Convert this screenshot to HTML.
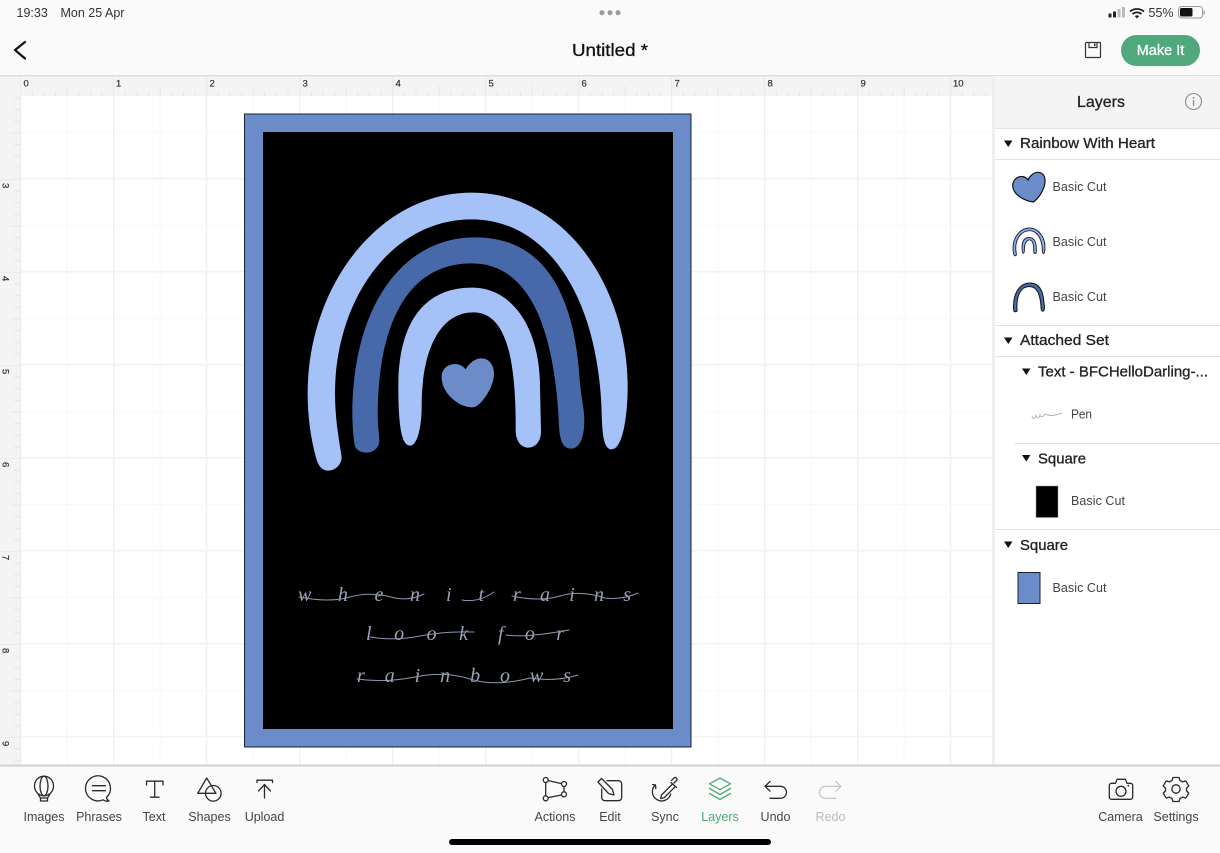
<!DOCTYPE html>
<html><head><meta charset="utf-8"><title>Untitled</title>
<style>
html,body{margin:0;padding:0;background:#fafafa;width:1220px;height:853px;overflow:hidden}
svg{display:block}
text{font-family:"Liberation Sans",sans-serif}
.lab{font-size:12.5px;fill:#444;text-anchor:middle}
.ic{fill:none;stroke:#2b2b2b;stroke-width:1.3;stroke-linecap:round;stroke-linejoin:round}
.rl{font-size:9.5px;fill:#333;stroke:#333;stroke-width:.2}
.hd{font-size:14.5px;fill:#222;stroke:#222;stroke-width:.3}
.cut{font-size:12.5px;fill:#444}
.tri{fill:#111}
.sc{font-family:"Liberation Serif",serif;font-style:italic;font-size:20px;fill:#9ba2b6}
.cn{fill:none;stroke:#8f97ad;stroke-width:1;stroke-linecap:round}
</style></head><body>
<svg width="1220" height="853" viewBox="0 0 1220 853" xmlns="http://www.w3.org/2000/svg">
<defs>
<pattern id="gv" x="20.2" y="0" width="93" height="10" patternUnits="userSpaceOnUse"><rect x="0" width="1" height="10" fill="#ebebeb"/><rect x="46.5" width="1" height="10" fill="#f7f7f7"/></pattern>
<pattern id="gh" x="0" y="85.5" width="10" height="93" patternUnits="userSpaceOnUse"><rect y="92.2" width="10" height=".8" fill="#f3f3f3"/><rect y="0" width="10" height="1" fill="#f3f3f3"/><rect y="46.5" width="10" height="1" fill="#f8f8f8"/></pattern>
<pattern id="tx" x="20.2" y="76" width="93" height="20" patternUnits="userSpaceOnUse"><g fill="#e6e6e6"><rect x="11.6" y="15" width="1" height="5"/><rect x="23.2" y="15" width="1" height="5"/><rect x="34.9" y="15" width="1" height="5"/><rect x="46.5" y="10" width="1" height="10"/><rect x="58.1" y="15" width="1" height="5"/><rect x="69.8" y="15" width="1" height="5"/><rect x="81.4" y="15" width="1" height="5"/><rect x="0" y="0" width="1" height="20" fill="#e8e8e8"/></g></pattern>
<pattern id="ty" x="0" y="86" width="20" height="93" patternUnits="userSpaceOnUse"><g fill="#e6e6e6"><rect x="14" y="11.6" width="6" height="1"/><rect x="14" y="23.2" width="6" height="1"/><rect x="14" y="34.9" width="6" height="1"/><rect x="10" y="46.5" width="10" height="1"/><rect x="14" y="58.1" width="6" height="1"/><rect x="14" y="69.8" width="6" height="1"/><rect x="14" y="81.4" width="6" height="1"/><rect x="0" y="0" width="20" height="1" fill="#ebebeb"/></g></pattern>
<path id="ao" d="M65 840C45 770 38 700 38 640C38 320 250 38 530 38C810 38 998 320 998 620C998 700 985 808 950 808C925 808 922 760 920 700C910 340 750 118 530 118C285 118 120 365 120 640C120 710 130 770 140 830C140 855 120 872 100 872C82 872 72 860 65 840Z"/>
<path id="am" d="M178 790C172 740 172 710 172 680C180 365 330 172 540 172C750 172 840 345 855 610C860 660 868 690 868 720C868 770 855 806 828 806C805 806 795 785 792 740C780 440 700 250 530 250C330 250 250 445 248 700C248 740 253 765 253 785C250 808 232 818 215 818C195 818 180 808 178 790Z"/>
<path id="ai" d="M310 620C310 425 390 323 530 323C660 323 735 455 735 620L738 755C738 785 720 803 700 803C680 803 662 785 662 750L662 720C660 540 635 397 535 397C440 397 380 500 380 680C380 730 370 797 345 797C320 797 310 740 310 620Z"/>
<path id="ah" d="M440 592C440 565 460 552 480 552C495 552 505 560 512 568C522 550 540 535 558 535C582 535 597 555 597 580C597 620 565 665 545 678C535 685 520 682 500 675C470 660 440 630 440 592Z"/>
</defs>

<rect width="1220" height="853" fill="#fafafa"/>

<!-- canvas -->
<rect x="0" y="76" width="995" height="690" fill="#fff"/>
<rect x="20" y="96" width="975" height="669" fill="url(#gv)"/>
<rect x="20" y="96" width="975" height="669" fill="url(#gh)"/>
<rect x="0" y="76" width="995" height="20" fill="#f4f4f4"/>
<rect x="20" y="76" width="975" height="20" fill="url(#tx)"/>
<rect x="0" y="96" width="20" height="669" fill="#f4f4f4"/>
<rect x="0" y="96" width="20" height="669" fill="url(#ty)"/>
<rect x="20" y="76" width="1" height="690" fill="#ececec"/>
<rect x="0" y="75" width="1220" height="1.6" fill="#dfdfdf"/>

<g class="rl">
<text class="rl" x="23.5" y="86.5">0</text><text class="rl" x="116" y="86.5">1</text><text class="rl" x="209.5" y="86.5">2</text><text class="rl" x="302.5" y="86.5">3</text><text class="rl" x="395.5" y="86.5">4</text><text class="rl" x="488.5" y="86.5">5</text><text class="rl" x="581.5" y="86.5">6</text><text class="rl" x="674.5" y="86.5">7</text><text class="rl" x="767.5" y="86.5">8</text><text class="rl" x="860.5" y="86.5">9</text><text class="rl" x="953" y="86.5">10</text>
<text class="rl" transform="translate(2.5,183) rotate(90)">3</text><text class="rl" transform="translate(2.5,276) rotate(90)">4</text><text class="rl" transform="translate(2.5,369) rotate(90)">5</text><text class="rl" transform="translate(2.5,462) rotate(90)">6</text><text class="rl" transform="translate(2.5,555) rotate(90)">7</text><text class="rl" transform="translate(2.5,648) rotate(90)">8</text><text class="rl" transform="translate(2.5,741) rotate(90)">9</text>
</g>

<!-- artboard -->
<rect x="244.5" y="114" width="446.5" height="633" fill="#6b8cc9" stroke="#1a2233" stroke-width="1"/>
<rect x="263" y="132" width="410" height="597" fill="#000"/>
<g transform="translate(295,180) scale(.33333)">
<use href="#ao" fill="#a4c2f8"/><use href="#am" fill="#4769a9"/><use href="#ai" fill="#a4c2f8"/><use href="#ah" fill="#6b8cc9"/>
</g>
<!-- script text -->
<text class="sc" x="298" y="601" textLength="122" lengthAdjust="spacing">when</text>
<text class="sc" x="446" y="601" textLength="38" lengthAdjust="spacing">it</text>
<text class="sc" x="513" y="601" textLength="118" lengthAdjust="spacing">rains</text>
<text class="sc" x="366" y="640" textLength="102" lengthAdjust="spacing">look</text>
<text class="sc" x="498" y="640" textLength="66" lengthAdjust="spacing">for</text>
<text class="sc" x="357" y="682" textLength="214" lengthAdjust="spacing">rainbows</text>
<path class="cn" d="M299 597Q330 603 350 597T395 598Q410 601 424 594M462 600Q478 603 494 592M512 596Q540 602 560 596T605 598Q622 600 638 593M370 637Q395 641 420 636T474 632M506 635Q525 638 569 630M357 679Q385 683 415 677T470 679T530 678Q555 682 578 675"/>

<!-- panel -->
<rect x="992" y="76" width="3" height="690" fill="#efefef"/>
<rect x="995" y="76" width="225" height="690" fill="#fff"/>
<rect x="995" y="76" width="225" height="52" fill="#f4f4f4"/>
<rect x="995" y="128" width="225" height="1" fill="#e4e4e4"/>
<text x="1101" y="107" text-anchor="middle" style="font-size:16px;fill:#222;stroke:#222;stroke-width:.3">Layers</text>
<circle cx="1193.5" cy="101.5" r="8" fill="none" stroke="#8a8a8a" stroke-width="1.1"/>
<rect x="1192.9" y="100" width="1.3" height="6" fill="#8a8a8a"/><rect x="1192.8" y="97" width="1.5" height="1.6" fill="#8a8a8a"/>

<g fill="#e4e4e4">
<rect x="995" y="159" width="225" height="1"/>
<rect x="995" y="325" width="225" height="1"/>
<rect x="995" y="356" width="225" height="1"/>
<rect x="1014" y="443" width="206" height="1"/>
<rect x="995" y="529" width="225" height="1"/>
</g>
<path class="tri" d="M1004 140.500h8.500l-4.250 6.500zM1004 337.500h8.500l-4.250 6.500zM1022 368.500h8.500l-4.250 6.500zM1022 455h8.500l-4.250 6.500zM1004 541.500h8.500l-4.250 6.500z"/>
<text class="hd" x="1020" y="148" textLength="135" lengthAdjust="spacingAndGlyphs">Rainbow With Heart</text>
<text class="hd" x="1020" y="345" textLength="89" lengthAdjust="spacingAndGlyphs">Attached Set</text>
<text class="hd" x="1038" y="376.500" textLength="170" lengthAdjust="spacingAndGlyphs">Text - BFCHelloDarling-...</text>
<text class="hd" x="1038" y="463.500" textLength="48" lengthAdjust="spacingAndGlyphs">Square</text>
<text class="hd" x="1020" y="550" textLength="48" lengthAdjust="spacingAndGlyphs">Square</text>

<text class="cut" x="1052.500" y="191" textLength="54">Basic Cut</text>
<text class="cut" x="1052.500" y="246" textLength="54">Basic Cut</text>
<text class="cut" x="1052.500" y="301" textLength="54">Basic Cut</text>
<text class="cut" x="1071" y="418.500" textLength="21" lengthAdjust="spacingAndGlyphs">Pen</text>
<text class="cut" x="1071" y="505" textLength="54">Basic Cut</text>
<text class="cut" x="1052.500" y="592" textLength="54">Basic Cut</text>

<path d="M1012.700 186C1012.700 180 1017 176.500 1021.700 176.500C1024.500 176.500 1026.500 178 1028 180C1030 175.500 1034 172.300 1038 172.300C1043 172.300 1045.300 176.500 1045 182C1044.500 190 1038 199 1033.300 202C1026 201 1013.500 196 1012.700 186Z" fill="#6b8cc9" stroke="#111" stroke-width="1.200"/>
<g transform="translate(1013,228) scale(.0333) translate(-38,-38)"><use href="#ao" fill="#8fb0ea" stroke="#1a2233" stroke-width="28"/><use href="#ai" fill="#8fb0ea" stroke="#1a2233" stroke-width="28"/></g>
<g transform="translate(1013.500,283) scale(.0445) translate(-172,-172)"><use href="#am" fill="#4769a9" stroke="#111" stroke-width="22"/></g>
<path d="M1032 416c1 4 3 3 4-1 1 4 3 4 4 0 1 3 3 2 5-1 5 3 11 1 17-1" fill="none" stroke="#aeb2c4" stroke-width="1"/>
<rect x="1036" y="486" width="22" height="31.500" fill="#000" stroke="#999" stroke-width=".5"/>
<rect x="1018" y="572.500" width="22" height="31" fill="#6b8cc9" stroke="#1a2233" stroke-width="1"/>

<!-- status bar -->
<text x="16.500" y="17" style="font-size:12.500px;fill:#333">19:33</text>
<text x="60.500" y="17" style="font-size:12.500px;fill:#333">Mon 25 Apr</text>
<g fill="#999"><circle cx="602" cy="12.700" r="2.500"/><circle cx="610" cy="12.700" r="2.500"/><circle cx="618" cy="12.700" r="2.500"/></g>
<g><rect x="1108.500" y="13.500" width="3" height="4" rx=".6" fill="#222"/><rect x="1113" y="11.500" width="3" height="6" rx=".6" fill="#222"/><rect x="1117.500" y="9" width="3" height="8.500" rx=".6" fill="#bbb"/><rect x="1122" y="7" width="3" height="10.500" rx=".6" fill="#bbb"/></g>
<path d="M1130 11.500a11 11 0 0 1 14 0M1132.500 14a7 7 0 0 1 9 0" fill="none" stroke="#222" stroke-width="1.800"/><path d="M1134.800 16.100a3.500 3.500 0 0 1 4.400 0L1137 18.500z" fill="#222"/>
<text x="1148.500" y="17" style="font-size:12.500px;fill:#333">55%</text>
<rect x="1178.500" y="6.500" width="24" height="11.500" rx="3" fill="none" stroke="#999"/><rect x="1180" y="8" width="12.500" height="8.500" rx="1.500" fill="#111"/><rect x="1203.500" y="10.500" width="1.300" height="4" fill="#999"/>

<!-- nav bar -->
<path d="M25 42L15 50l10 8.500" fill="none" stroke="#111" stroke-width="2.200" stroke-linecap="round" stroke-linejoin="round"/>
<text x="572" y="56" textLength="76" lengthAdjust="spacingAndGlyphs" style="font-size:17.500px;fill:#111;stroke:#111;stroke-width:.3">Untitled *</text>
<g fill="none" stroke="#333" stroke-width="1.200"><rect x="1085.500" y="42.500" width="15" height="15" rx="1"/><path d="M1089 43v4.500h8V43"/><rect x="1094" y="43.500" width="1.500" height="2.500" fill="#333" stroke="none"/></g>
<rect x="1121" y="35" width="79" height="31" rx="15.500" fill="#4fa97c"/>
<text x="1160.500" y="55" text-anchor="middle" style="font-size:14.500px;fill:#fff;stroke:#fff;stroke-width:.25">Make It</text>

<!-- toolbar -->
<rect x="0" y="764.500" width="1220" height="2.200" fill="#d2d2d2"/>
<rect x="0" y="766.700" width="1220" height="86.300" fill="#fafafa"/>

<g class="ic">
<!-- images -->
<ellipse cx="44" cy="786" rx="9.500" ry="9.800"/><ellipse cx="44" cy="786" rx="4" ry="9.800"/><path d="M38 794l2.500 4h7l2.500-4M40.500 798v3h7v-3"/>
<!-- phrases -->
<path d="M106.500 797.500a12.500 12.500 0 1 0-3.500 2.300c1.500 1.200 3.500 1.700 6 1.200-1.500-1-2.300-2-2.500-3.500z"/><path d="M92.500 785.700h13M92.500 790.700h13"/>
<!-- text -->
<path d="M146.500 785v-3.800h16.500v3.800M154.700 781.200v16M150.500 797.200h8.500"/>
<!-- shapes -->
<path d="M206.700 778l-9 15.300h18.300z"/><circle cx="213.300" cy="793.300" r="7.800"/>
<!-- upload -->
<path d="M257 782.500v-2.300h15.500v2.300M264.500 798v-13.500M258.500 791l6-6.500 6 6.500"/>
<!-- actions -->
<path d="M545.700 782.500v13M548.300 780.600l13.200 3M564 786.500v5.500M561.600 795l-13.400 2.600"/><circle cx="545.700" cy="780" r="2.500"/><circle cx="564" cy="784" r="2.500"/><circle cx="564" cy="794.300" r="2.500"/><circle cx="545.700" cy="798.300" r="2.500"/>
<!-- edit -->
<path d="M607 780.700h11.500a3.200 3.200 0 0 1 3.200 3.200v13.600a3.200 3.200 0 0 1-3.200 3.200h-13.600a3.200 3.200 0 0 1-3.200-3.200v-8.500"/><path d="M598 782l3.500-3.500 11 11 1.500 5.500-5.500-1.500z"/>
<!-- sync -->
<path d="M655.200 785A9.300 9.300 0 1 0 670.700 794M652.500 784.500l3 .4.300 3.600"/><path d="M671 782.500l5.500 5M672.500 784l-11 11-.8 3.500 3.500-.8 11-11M674 783l2.500-2.500c1.500-1.500-1-4-2.500-2.500l-2.500 2.500"/>
<!-- undo -->
<path d="M770 781.500l-5 4.800 5 4.800M765 786.300h15.500a5 5 0 0 1 0 12H770"/>
<!-- camera -->
<path d="M1111.500 783.300h4l1.500-4h8.500l1.500 4h3.500a2.200 2.200 0 0 1 2.200 2.200v11.600a2.200 2.200 0 0 1-2.200 2.200h-19a2.200 2.200 0 0 1-2.200-2.200v-11.600a2.200 2.200 0 0 1 2.200-2.200z"/><circle cx="1121" cy="791.300" r="5"/>
<!-- settings -->
<path d="M1173 777.500h6l1 3 2.800 1.400 3-1 3 5-2.300 2.200v2.800l2.300 2.200-3 5-3-1-2.800 1.400-1 3h-6l-1-3-2.800-1.400-3 1-3-5 2.300-2.200v-2.800l-2.300-2.200 3-5 3 1 2.800-1.400z"/><circle cx="1176" cy="789" r="4.200"/>
</g>
<circle cx="1128.300" cy="785.700" r=".9" fill="#2b2b2b"/>
<!-- layers icon -->
<g fill="none" stroke="#4fa97c" stroke-width="1.300" stroke-linejoin="round" stroke-linecap="round"><path d="M720 778l10.500 5.800-10.500 5.800-10.500-5.800z"/><path d="M709.500 788.500l10.500 6 10.500-6M709.500 793.500l10.500 6 10.500-6"/></g>
<!-- redo -->
<path d="M836 781.500l5 4.800-5 4.800M841 786.300h-15.500a5 5 0 0 0 0 12H836" fill="none" stroke="#c9c9c9" stroke-width="1.300" stroke-linecap="round" stroke-linejoin="round"/>

<text class="lab" x="44" y="821">Images</text>
<text class="lab" x="99" y="821">Phrases</text>
<text class="lab" x="154" y="821">Text</text>
<text class="lab" x="209.500" y="821">Shapes</text>
<text class="lab" x="264.500" y="821">Upload</text>
<text class="lab" x="555" y="821">Actions</text>
<text class="lab" x="610" y="821">Edit</text>
<text class="lab" x="665" y="821">Sync</text>
<text class="lab" x="720" y="821" style="fill:#4fa97c">Layers</text>
<text class="lab" x="775.500" y="821">Undo</text>
<text class="lab" x="830.500" y="821" style="fill:#bbb">Redo</text>
<text class="lab" x="1120.500" y="821">Camera</text>
<text class="lab" x="1176" y="821">Settings</text>

<rect x="449" y="839" width="322" height="6" rx="3" fill="#000"/>
</svg>
</body></html>
